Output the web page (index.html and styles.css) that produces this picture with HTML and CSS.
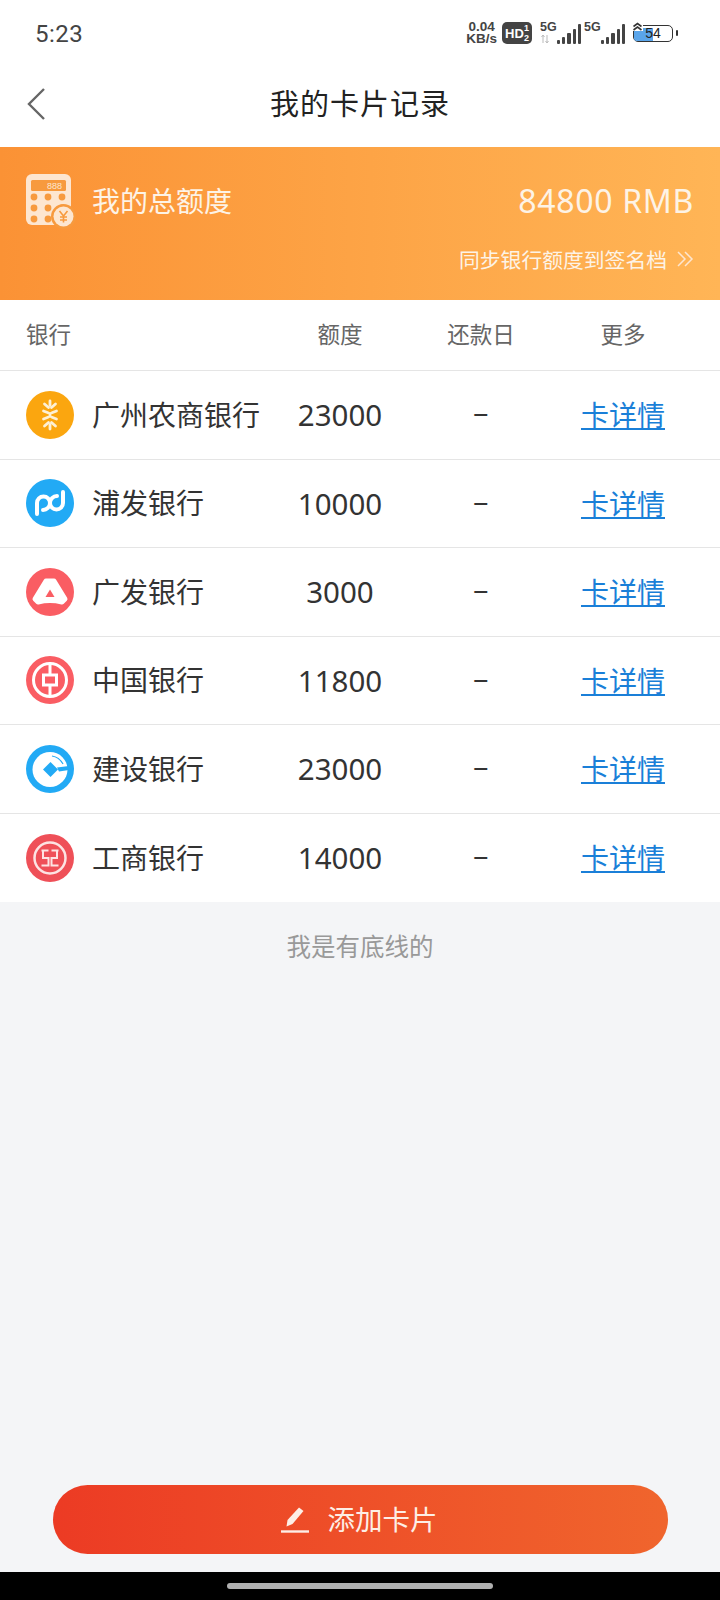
FILE: index.html
```html
<!DOCTYPE html>
<html lang="zh-CN">
<head>
    <meta charset="UTF-8">
    <meta name="viewport" content="width=device-width, initial-scale=1.0">
    <title>我的卡片记录</title>
    <link rel="stylesheet" href="styles.css">
</head>
<body>
    <div class="phone">
        <div class="status-bar">
            <span class="time">5:23</span>
            <div class="status-icons">
                <div class="speed"><span>0.04</span><span>KB/s</span></div>
                <div class="hd"><span>HD</span><span class="hd-nums"><i>1</i><i>2</i></span></div>
                <div class="signal signal-first">
                    <span class="net">5G</span>
                    <svg class="arrows" width="10" height="10" viewBox="0 0 10 10"><path d="M3 1v8M1.500 3 3 1l1.500 2M7 9V1M5.500 7 7 9l1.500-2" fill="none" stroke="#bbb" stroke-width="1"/></svg>
                    <div class="bars"><b class="b0"></b><b class="b1"></b><b class="b2"></b><b class="b3"></b><b class="b4"></b></div>
                </div>
                <div class="signal">
                    <span class="net">5G</span>
                    <div class="bars"><b class="b0"></b><b class="b1"></b><b class="b2"></b><b class="b3"></b><b class="b4"></b></div>
                </div>
                <div class="battery">
                    <svg class="charge" width="11" height="9" viewBox="0 0 11 9"><path d="M1.500 4.500 5.500 1.500l4 3M1.500 8l4-3 4 3" fill="none" stroke="#333" stroke-width="1.600"/></svg>
                    <div class="battery-body"><div class="battery-fill"></div><span>54</span></div>
                    <div class="battery-tip"></div>
                </div>
            </div>
        </div>

        <div class="nav-bar">
            <svg class="back" width="20" height="34" viewBox="0 0 20 34"><path d="M18 2 3 17l15 15" fill="none" stroke="#666" stroke-width="2.400"/></svg>
            <h1>我的卡片记录</h1>
        </div>

        <div class="banner">
            <div class="banner-left">
                <svg class="calc" width="50" height="56" viewBox="0 0 50 56">
                    <rect x="0" y="0" width="45" height="51" rx="6" fill="#fde6d0"/>
                    <rect x="5" y="6" width="35" height="11" rx="1.500" fill="#f79a3e"/>
                    <text x="21" y="15" font-size="9" fill="#fde6d0" font-family="Liberation Sans, sans-serif">888</text>
                    <g fill="#f79a3e">
                        <circle cx="8" cy="23" r="3.400"/><circle cx="22" cy="23" r="3.400"/><circle cx="36" cy="23" r="3.400"/>
                        <circle cx="8" cy="34" r="3.400"/><circle cx="22" cy="34" r="3.400"/><circle cx="36" cy="34" r="3.400"/>
                        <circle cx="8" cy="45" r="3.400"/><circle cx="22" cy="45" r="3.400"/>
                    </g>
                    <circle cx="37.500" cy="42.500" r="12.500" fill="#f79a3e"/>
                    <circle cx="37.500" cy="42.500" r="10" fill="#fde6d0"/>
                    <path d="M33.500 37l4 5 4-5M37.500 42v6.500M34 43h7M34 46h7" fill="none" stroke="#f79a3e" stroke-width="1.600"/>
                </svg>
                <span class="banner-title">我的总额度</span>
            </div>
            <div class="banner-right">
                <div class="total">84800 RMB</div>
                <div class="sync">同步银行额度到签名档
                    <svg width="18" height="16" viewBox="0 0 18 16"><path d="M2 1l7 7-7 7M9 1l7 7-7 7" fill="none" stroke="#fde6d0" stroke-width="1.500"/></svg>
                </div>
            </div>
        </div>

        <div class="table">
            <div class="row head">
                <div class="col-bank head-bank">银行</div>
                <div class="col-limit">额度</div>
                <div class="col-day">还款日</div>
                <div class="col-more">更多</div>
            </div>

            <div class="row">
                <div class="col-bank">
                    <svg class="logo" viewBox="0 0 48 48">
                        <circle cx="24" cy="24" r="24" fill="#fba60f"/>
                        <g fill="none" stroke="#fdf0d5" stroke-width="2.800" stroke-linecap="round">
                            <path d="M24 10v4.500M24 33.500v4.500M24 22.500v3"/>
                            <path d="M18.500 13l4 3.500M29.500 13l-4 3.500M17.500 20l4.500 1.800M30.500 20l-4.500 1.800M17.500 28l4.500-1.800M30.500 28l-4.500-1.800M18.500 35l4-3.500M29.500 35l-4-3.500"/>
                        </g>
                    </svg>
                    <span>广州农商银行</span>
                </div>
                <div class="col-limit">23000</div>
                <div class="col-day"><span class="dash">-</span></div>
                <div class="col-more"><a href="#">卡详情</a></div>
            </div>

            <div class="row">
                <div class="col-bank">
                    <svg class="logo" viewBox="0 0 48 48">
                        <circle cx="24" cy="24" r="24" fill="#22aaf5"/>
                        <g fill="none" stroke="#fff" stroke-width="4" stroke-linecap="round">
                            <path d="M11 35V24a6.500 6.500 0 0 1 13 0a6.500 6.500 0 0 0 13 0V13"/>
                            <path d="M24 24a7 7 0 0 1-7 7M24 24a7 7 0 0 1 7-7"/>
                        </g>
                    </svg>
                    <span>浦发银行</span>
                </div>
                <div class="col-limit">10000</div>
                <div class="col-day"><span class="dash">-</span></div>
                <div class="col-more"><a href="#">卡详情</a></div>
            </div>

            <div class="row">
                <div class="col-bank">
                    <svg class="logo" viewBox="0 0 48 48">
                        <circle cx="24" cy="24" r="24" fill="#fa5d63"/>
                        <path d="M20 13h8l11 18-3 3q-12-3-24 0l-3-3z" fill="#fff" stroke="#fff" stroke-width="5" stroke-linejoin="round"/>
                        <path d="M24 21.500l4.500 7.500h-9z" fill="#fa5d63"/>
                    </svg>
                    <span>广发银行</span>
                </div>
                <div class="col-limit">3000</div>
                <div class="col-day"><span class="dash">-</span></div>
                <div class="col-more"><a href="#">卡详情</a></div>
            </div>

            <div class="row">
                <div class="col-bank">
                    <svg class="logo" viewBox="0 0 48 48">
                        <circle cx="24" cy="24" r="24" fill="#fa5d63"/>
                        <circle cx="24" cy="24" r="16.500" fill="none" stroke="#fff" stroke-width="3"/>
                        <rect x="17.500" y="19" width="13" height="10" fill="none" stroke="#fff" stroke-width="3"/>
                        <path d="M24 8v11M24 29v11" stroke="#fff" stroke-width="3"/>
                    </svg>
                    <span>中国银行</span>
                </div>
                <div class="col-limit">11800</div>
                <div class="col-day"><span class="dash">-</span></div>
                <div class="col-more"><a href="#">卡详情</a></div>
            </div>

            <div class="row">
                <div class="col-bank">
                    <svg class="logo" viewBox="0 0 48 48">
                        <circle cx="24" cy="24" r="24" fill="#22aaf5"/>
                        <circle cx="24" cy="24.500" r="17.500" fill="#fff"/>
                        <path d="M31 22.500 43 21v4l-10 1.500z" fill="#22aaf5"/>
                        <path d="M26 11q7 1 11 8" fill="none" stroke="#22aaf5" stroke-width="1.200"/>
                        <path d="M24.500 17l7.500 7.500-7.500 7.500-7.500-7.500z" fill="#22aaf5"/>
                    </svg>
                    <span>建设银行</span>
                </div>
                <div class="col-limit">23000</div>
                <div class="col-day"><span class="dash">-</span></div>
                <div class="col-more"><a href="#">卡详情</a></div>
            </div>

            <div class="row row-last">
                <div class="col-bank">
                    <svg class="logo" viewBox="0 0 48 48">
                        <circle cx="24" cy="24" r="24" fill="#ef5058"/>
                        <circle cx="24" cy="24" r="15.500" fill="none" stroke="#fde3e3" stroke-width="2.500"/>
                        <path d="M22.500 16.500H15.500M17 16.500V24H22.500V31.500H15.500M25.500 16.500H32.500M31 16.500V24H25.500V31.500H32.500" fill="none" stroke="#fde3e3" stroke-width="2"/>
                    </svg>
                    <span>工商银行</span>
                </div>
                <div class="col-limit">14000</div>
                <div class="col-day"><span class="dash">-</span></div>
                <div class="col-more"><a href="#">卡详情</a></div>
            </div>
        </div>

        <div class="content">
            <p class="bottom-line">我是有底线的</p>
            <button class="add-btn">
                <svg width="30" height="28" viewBox="0 0 30 28"><path d="M19 1.500l4.500 3.500-11 13-6 2.500 1-6.500z" fill="#fdeee6"/><path d="M1 25.500h28" stroke="#fdeee6" stroke-width="2.400"/></svg>
                <span>添加卡片</span>
            </button>
        </div>

        <div class="home-area"><div class="home-bar"></div></div>
    </div>
</body>
</html>
```

FILE: styles.css
```css
* {
    box-sizing: border-box;
}
body {
    margin: 0;
    font-family: "Noto Sans CJK SC", "Noto Sans", sans-serif;
    background-color: #f4f5f7;
}
.phone {
    width: 720px;
    height: 1600px;
    display: flex;
    flex-direction: column;
    overflow: hidden;
}

/* status bar */
.status-bar {
    height: 64px;
    background-color: #fff;
    display: flex;
    justify-content: space-between;
    align-items: center;
    padding: 2px 42px 0 35px;
    color: #444;
}
.time {
    font-family: Roboto, sans-serif;
    font-size: 24px;
    letter-spacing: 0.5px;
    margin-top: 2px;
}
.status-icons {
    display: flex;
    align-items: center;
}
.speed {
    display: flex;
    flex-direction: column;
    font-family: "Liberation Sans", sans-serif;
    font-size: 13.500px;
    font-weight: 700;
    line-height: 12px;
    text-align: center;
    margin-right: 5px;
}
.hd {
    width: 30px;
    height: 22px;
    background-color: #444;
    border-radius: 5px;
    color: #fff;
    display: flex;
    align-items: center;
    justify-content: center;
    font-family: "Liberation Sans", sans-serif;
    font-size: 13px;
    font-weight: 700;
    margin-right: 7px;
}
.hd-nums {
    display: flex;
    flex-direction: column;
    font-size: 9px;
    line-height: 10px;
}
.hd-nums i {
    font-style: normal;
}
.signal {
    position: relative;
    width: 43px;
    height: 22px;
    display: flex;
    align-items: flex-end;
    justify-content: flex-end;
}
.signal-first {
    margin-right: 1px;
}
.net {
    position: absolute;
    left: 1px;
    top: -1px;
    font-family: "Liberation Sans", sans-serif;
    font-size: 12.500px;
    font-weight: 700;
    line-height: 13px;
}
.arrows {
    position: absolute;
    left: 1px;
    bottom: 0;
}
.bars {
    display: flex;
    align-items: flex-end;
    gap: 2px;
    margin-right: 1px;
}
.bars b {
    display: block;
    width: 3.2px;
    background-color: #444;
    border-radius: 1px;
}
.bars .b0 { height: 4px; }
.bars .b1 { height: 7px; }
.bars .b2 { height: 11px; }
.bars .b3 { height: 15px; }
.bars .b4 { height: 20px; }
.battery {
    position: relative;
    display: flex;
    align-items: center;
    margin-left: 7px;
}
.charge {
    position: absolute;
    left: -1px;
    top: -3px;
    z-index: 1;
    background-color: #fff;
}
.battery-body {
    position: relative;
    width: 40px;
    height: 17px;
    border: 1.5px solid #333;
    border-radius: 5px;
    font-family: "Liberation Sans", sans-serif;
    font-size: 14px;
    line-height: 14px;
    text-align: center;
    color: #222;
}
.battery-fill {
    position: absolute;
    left: 0;
    top: 2px;
    bottom: 0;
    width: 19px;
    background-color: #5aa5ea;
    border-radius: 3px 0 0 3px;
}
.battery-body span {
    position: relative;
}
.battery-tip {
    width: 2px;
    height: 6px;
    background-color: #333;
    margin-left: 3px;
    border-radius: 1px;
}

/* nav */
.nav-bar {
    position: relative;
    height: 83px;
    background-color: #fff;
    display: flex;
    align-items: center;
    justify-content: center;
    padding-bottom: 7px;
}
.back {
    position: absolute;
    left: 26px;
    top: 23px;
}
h1 {
    margin: 0;
    font-size: 29px;
    font-weight: 400;
    color: #222;
    letter-spacing: 1px;
}

/* banner */
.banner {
    height: 153px;
    background: linear-gradient(90deg, #fb9235, #ffb556);
    display: flex;
    justify-content: space-between;
    padding: 27px 26px 0;
    color: #fdf3e6;
}
.banner-left {
    display: flex;
    align-items: flex-start;
}
.banner-title {
    font-size: 28px;
    line-height: 40px;
    margin: 6px 0 0 16px;
}
.banner-right {
    display: flex;
    flex-direction: column;
    align-items: flex-end;
}
.total {
    font-family: "Noto Sans", sans-serif;
    font-size: 32px;
    line-height: 46px;
    letter-spacing: 0.7px;
    margin-top: 4px;
}
.sync {
    display: flex;
    align-items: center;
    gap: 9px;
    font-size: 20.800px;
    line-height: 30px;
    margin-top: 20px;
}

/* table */
.table {
    background-color: #fff;
}
.row {
    height: 88.500px;
    display: flex;
    align-items: center;
    border-bottom: 1px solid #e5e5e5;
    font-size: 28px;
    color: #333;
    text-align: center;
}
.row-last {
    border-bottom: none;
}
.head {
    height: 71px;
    padding-bottom: 4px;
    font-size: 22.500px;
    color: #666;
}
.col-bank {
    width: 270px;
    padding-left: 26px;
    display: flex;
    align-items: center;
    text-align: left;
}
.col-bank span {
    margin: 0 0 2px 18px;
    white-space: nowrap;
}
.logo {
    width: 48px;
    height: 48px;
    flex-shrink: 0;
}
.col-limit {
    width: 140px;
    font-family: "Noto Sans", sans-serif;
    font-size: 29.500px;
}
.head .col-limit {
    font-family: inherit;
    font-size: 22.500px;
}
.col-day {
    width: 142px;
}
.dash {
    display: inline-block;
    transform: scaleX(1.8);
    margin-bottom: 7px;
}
.col-more {
    width: 142px;
}
.col-more a {
    display: inline-block;
    margin-bottom: 1px;
    color: #1a7fd8;
}

/* bottom */
.content {
    flex: 1;
    display: flex;
    flex-direction: column;
    align-items: center;
}
.bottom-line {
    margin: 27px 0 0;
    font-size: 24.500px;
    line-height: 34px;
    color: #999;
}
.add-btn {
    width: 615px;
    height: 69px;
    margin-top: auto;
    margin-bottom: 18px;
    border: none;
    border-radius: 35px;
    background: linear-gradient(90deg, #ec3b24, #f0652d);
    color: #fdeee6;
    font-family: inherit;
    font-size: 27.500px;
    display: flex;
    align-items: center;
    justify-content: center;
    gap: 18px;
}
.add-btn span {
    margin: 0 3px 3px 0;
}
.home-area {
    height: 28px;
    background-color: #000;
    display: flex;
    justify-content: center;
    padding-top: 11px;
}
.home-bar {
    width: 266px;
    height: 6px;
    background-color: #b0b0b0;
    border-radius: 3px;
}
```
